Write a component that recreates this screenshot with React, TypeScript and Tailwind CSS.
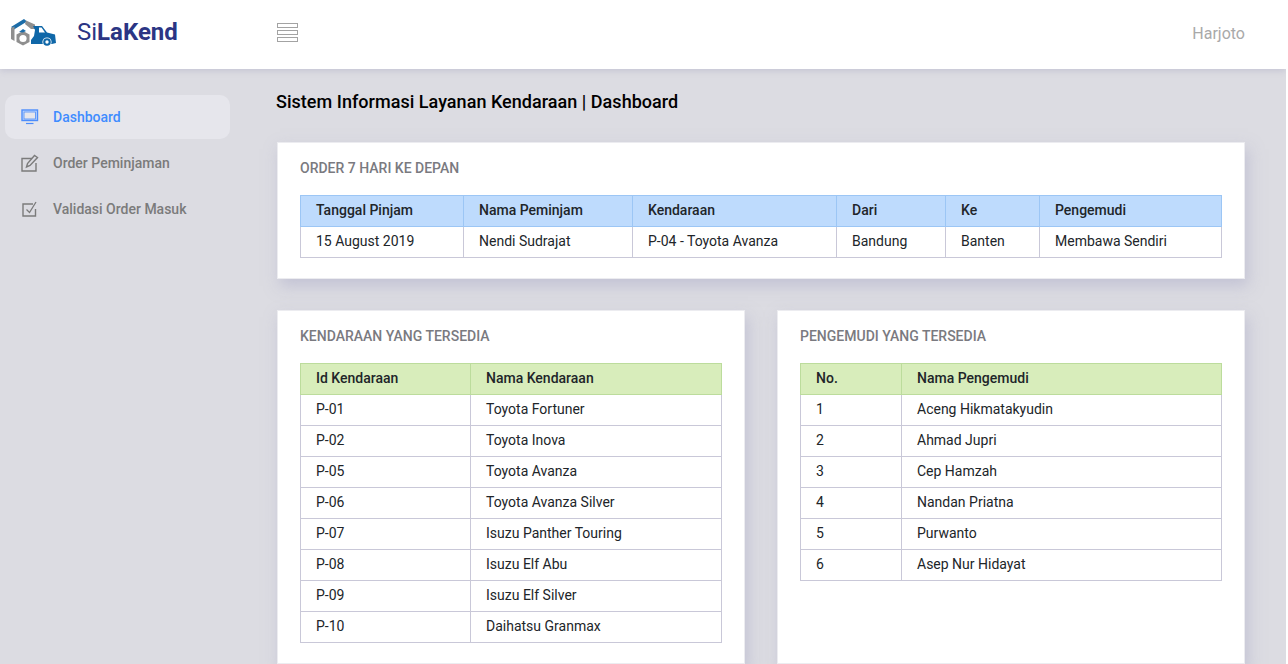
import React from "react";

const orderColumns = [
  { label: "Tanggal Pinjam", width: "w-[163px]" },
  { label: "Nama Peminjam", width: "w-[169px]" },
  { label: "Kendaraan", width: "w-[204px]" },
  { label: "Dari", width: "w-[109px]" },
  { label: "Ke", width: "w-[94px]" },
  { label: "Pengemudi", width: "" },
];

const orders = [["15 August 2019", "Nendi Sudrajat", "P-04 - Toyota Avanza", "Bandung", "Banten", "Membawa Sendiri"]];

const vehicles = [
  ["P-01", "Toyota Fortuner"],
  ["P-02", "Toyota Inova"],
  ["P-05", "Toyota Avanza"],
  ["P-06", "Toyota Avanza Silver"],
  ["P-07", "Isuzu Panther Touring"],
  ["P-08", "Isuzu Elf Abu"],
  ["P-09", "Isuzu Elf Silver"],
  ["P-10", "Daihatsu Granmax"],
];

const drivers = [
  ["1", "Aceng Hikmatakyudin"],
  ["2", "Ahmad Jupri"],
  ["3", "Cep Hamzah"],
  ["4", "Nandan Priatna"],
  ["5", "Purwanto"],
  ["6", "Asep Nur Hidayat"],
];

const Logo = () => (
  <svg width="46" height="29" viewBox="0 0 46 29" className="shrink-0">
    {/* roof */}
    <path d="M0 9 L13 1 L16 3.5 L3 11.5 Z" fill="#1b6ca8" />
    {/* wall and beam */}
    <path d="M0 10 L3.5 8.5 L3.5 23 L0 21 Z" fill="#8f8f8f" />
    <path d="M15 2.5 L24 6.5 L24 11 L20 11 L14 6 Z" fill="#8f8f8f" />
    {/* truck */}
    <path d="M22 8 L31 8 L36 14.5 L44 16.5 L45 25 L41 26 L20 26 L20 22 L23 18 L24 12 Z" fill="#0f67a8" />
    <path d="M28 9.5 L30.5 9.5 L34 14.5 L28 14.5 Z" fill="#fff" />
    <circle cx="36" cy="24" r="4.6" fill="#fff" />
    <circle cx="36" cy="24" r="3.8" fill="#0f67a8" />
    <circle cx="36" cy="24" r="1.7" fill="#fff" />
    {/* nut */}
    <path d="M12 12 L19.5 16 L19.5 24.5 L12 28.5 L4.5 24.5 L4.5 16 Z" fill="#fff" />
    <path d="M12 13 L18.5 16.5 L18.5 24 L12 27.5 L5.5 24 L5.5 16.5 Z" fill="#8f8f8f" />
    <circle cx="12" cy="20.5" r="3.6" fill="#fff" />
    <path d="M8 14 L12 11 L15 13 L12 14.5 Z" fill="#1b6ca8" />
  </svg>
);

const MonitorIcon = () => (
  <svg width="18" height="16" viewBox="0 0 18 16" fill="none" stroke="#4d8dfb" className="shrink-0">
    <rect x="1" y="1" width="15.5" height="10.5" strokeWidth="1.4" fill="#c5d9fb" />
    <rect x="3" y="3" width="11.5" height="7" strokeWidth="0.8" fill="#e6e6ec" />
    <path d="M5 14.5 H12.5" strokeWidth="1.2" />
  </svg>
);

const EditIcon = () => (
  <svg width="18" height="18" viewBox="0 0 18 18" fill="none" stroke="#7b7b7b" className="shrink-0">
    <path d="M11 4.5 H1 V17 H15 V9" strokeWidth="1.4" />
    <path d="M5.5 13 L6.5 9.5 L13.5 1.5 L16.5 3.5 L9 11.5 Z" strokeWidth="1.4" />
  </svg>
);

const CheckIcon = () => (
  <svg width="16" height="16" viewBox="0 0 16 16" fill="none" stroke="#7b7b7b" className="shrink-0">
    <path d="M11 3 H1 V15 H13.5 V8" strokeWidth="1.4" />
    <path d="M4.5 8.5 L7.5 11.5 L14 1" strokeWidth="1.3" />
  </svg>
);

type TableProps = {
  columns: { label: string; width: string }[];
  rows: string[][];
  blue?: boolean;
};

const DataTable = ({ columns, rows, blue }: TableProps) => {
  const headBg = blue ? "bg-[#bedbfd]" : "bg-[#d8edbb]";
  const headBorder = blue ? "border-[#9cc6f5]" : "border-[#bcdc9c]";
  return (
    <table className="w-full table-fixed border-collapse text-[14px] leading-[21px]">
      <thead>
        <tr>
          {columns.map((col) => (
            <th
              key={col.label}
              className={`${col.width} ${headBg} ${headBorder} h-[31px] border px-[15px] pt-0 pb-[2px] text-left font-medium text-[#212529]`}
            >
              {col.label}
            </th>
          ))}
        </tr>
      </thead>
      <tbody>
        {rows.map((row) => (
          <tr key={row.join()}>
            {row.map((cell, i) => (
              <td key={i} className="h-[31px] border border-[#c9c8d8] px-[15px] pt-0 pb-[2px] text-[#212529]">
                {cell}
              </td>
            ))}
          </tr>
        ))}
      </tbody>
    </table>
  );
};

const Card = ({ title, className, children }: { title: string; className: string; children: React.ReactNode }) => (
  <div className={`border border-[#ececf0] bg-white px-[22px] pt-[17px] shadow-[3px_7px_14px_rgba(170,170,200,0.5)] ${className}`}>
    <h2 className="mb-[19px] text-[14px] leading-[16px] font-medium text-[#7a7a80]">{title}</h2>
    {children}
  </div>
);

export default function App() {
  return (
    <div className="h-[664px] w-[1288px] overflow-hidden bg-white font-['Roboto',sans-serif]">
      <div className="flex h-[664px] w-[1286px] flex-col overflow-hidden bg-[#dcdce2]">
        <header className="z-10 flex h-[69px] shrink-0 items-center bg-white shadow-[0_2px_6px_rgba(170,170,195,0.45)]">
          <div className="flex w-[277px] items-center pl-[11px]">
            <span className="mb-[5px]">
              <Logo />
            </span>
            <span className="ml-[20px] mb-[5px] text-[24px] leading-[28px] text-[#2b3584]">
              Si<span className="font-bold">LaKend</span>
            </span>
          </div>
          <div className="mb-[4px] flex flex-col gap-[2px]">
            <span className="h-[5px] w-[21px] border border-[#a3a3a3]" />
            <span className="h-[5px] w-[21px] border border-[#a3a3a3]" />
            <span className="h-[5px] w-[21px] border border-[#a3a3a3]" />
          </div>
          <span className="mr-[41px] mb-[2px] ml-auto text-[16px] text-[#a9a9a9]">Harjoto</span>
        </header>

        <div className="flex flex-1 overflow-hidden">
          <nav className="w-[276px] shrink-0 pt-[26px] pl-[5px]">
            <a className="flex h-[44px] w-[225px] items-center gap-[14px] rounded-[10px] bg-[#e6e6ec] pl-[16px] text-[14px] font-medium text-[#3f8cff]">
              <MonitorIcon />
              <span>Dashboard</span>
            </a>
            <a className="mt-[2px] flex h-[44px] w-[225px] items-center gap-[14px] pl-[16px] text-[14px] font-medium text-[#7b7b7b]">
              <EditIcon />
              <span>Order Peminjaman</span>
            </a>
            <a className="mt-[2px] flex h-[44px] w-[225px] items-center gap-[15px] pl-[17px] text-[14px] font-medium text-[#7b7b7b]">
              <CheckIcon />
              <span>Validasi Order Masuk</span>
            </a>
          </nav>

          <main className="w-[969px] shrink-0">
            <h1 className="mt-[22px] text-[18px] leading-[21px] font-medium tracking-[0.03px] text-black">
              Sistem Informasi Layanan Kendaraan | Dashboard
            </h1>
            <Card title="ORDER 7 HARI KE DEPAN" className="mt-[30px] ml-[1px] h-[137px] w-[968px]">
              <DataTable columns={orderColumns} rows={orders} blue />
            </Card>
            <div className="mt-[31px] ml-[1px] flex gap-[32px]">
              <Card title="KENDARAAN YANG TERSEDIA" className="h-[354px] w-[468px] shrink-0">
                <DataTable
                  columns={[
                    { label: "Id Kendaraan", width: "w-[170px]" },
                    { label: "Nama Kendaraan", width: "" },
                  ]}
                  rows={vehicles}
                />
              </Card>
              <Card title="PENGEMUDI YANG TERSEDIA" className="h-[354px] w-[468px] shrink-0">
                <DataTable
                  columns={[
                    { label: "No.", width: "w-[101px]" },
                    { label: "Nama Pengemudi", width: "" },
                  ]}
                  rows={drivers}
                />
              </Card>
            </div>
          </main>
        </div>
      </div>
    </div>
  );
}
